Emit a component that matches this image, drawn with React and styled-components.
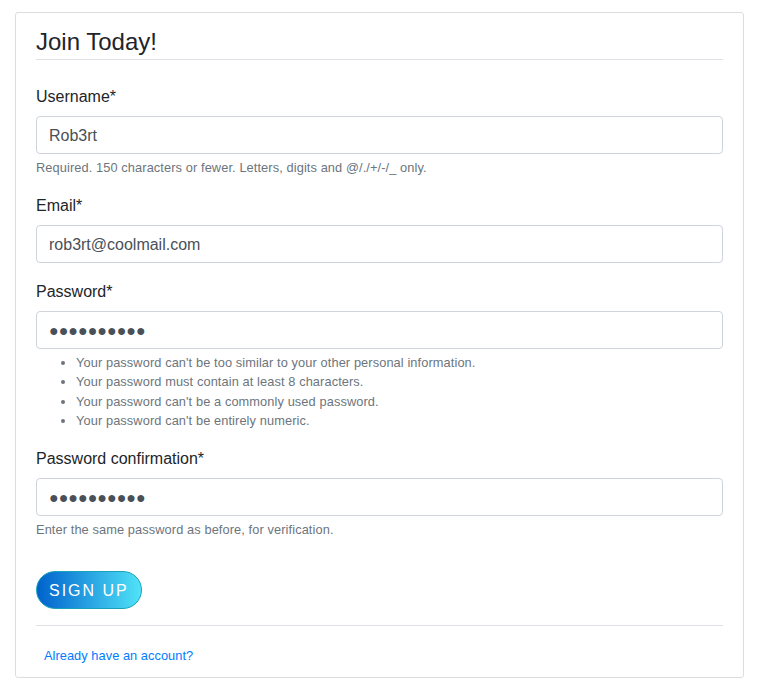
import React from "react";
import styled, { createGlobalStyle } from "styled-components";

const GlobalStyle = createGlobalStyle`
  * {
    box-sizing: border-box;
  }

  body {
    margin: 0;
    background: #fff;
    font-family: "Liberation Sans", Arial, sans-serif;
    font-size: 16px;
    line-height: 1.5;
    color: #212529;
  }
`;

const Page = styled.div`
  padding: 12px 15px;
`;

const Section = styled.div`
  background: #ffffff;
  padding: 10px 20px;
  border: 1px solid #dddddd;
  border-radius: 3px;
`;

const Fieldset = styled.fieldset`
  margin: 0 0 16px;
  padding: 0;
  border: 0;
  min-width: 0;
`;

const Legend = styled.legend`
  display: block;
  width: 100%;
  padding: 1px 0 0;
  margin: 0 0 24px;
  font-size: 24px;
  line-height: 35px;
  border-bottom: 1px solid #dee2e6;
`;

const Group = styled.div`
  margin-bottom: 16px;
`;

const Label = styled.label`
  display: block;
  padding-top: 1px;
  line-height: 23px;
  margin-bottom: 8px;
`;

const Input = styled.input`
  display: block;
  width: 100%;
  height: 38px;
  padding: 7px 12px 5px;
  font-family: inherit;
  font-size: 16px;
  line-height: 1.5;
  color: #495057;
  background: #fff;
  border: 1px solid #ced4da;
  border-radius: 4px;
  outline: none;
`;

const Help = styled.small`
  display: block;
  margin-top: 4px;
  font-size: 12.8px;
  line-height: 19.2px;
  letter-spacing: 0.1px;
  color: #6c757d;
`;

const Rules = styled.ul`
  margin: 0 0 16px;
  padding-left: 40px;
`;

const SignUp = styled.button`
  height: 38px;
  padding: 7px 12px 5px;
  font-family: inherit;
  font-size: 16px;
  line-height: 1.5;
  letter-spacing: 2px;
  color: #fff;
  background: linear-gradient(to right, #0062cc, #50e3f8);
  border: 1px solid #17a2b8;
  border-radius: 19px;
  cursor: pointer;
`;

const Footer = styled.div`
  border-top: 1px solid #dee2e6;
  padding-top: 17px;
  line-height: 23px;
`;

const Small = styled.small`
  font-size: 12.8px;
  letter-spacing: 0.05px;
`;

const SignInLink = styled.a`
  margin-left: 8px;
  color: #007bff;
  text-decoration: none;
`;

const rules = [
  "Your password can't be too similar to your other personal information.",
  "Your password must contain at least 8 characters.",
  "Your password can't be a commonly used password.",
  "Your password can't be entirely numeric.",
];

const mask = "\u25CF".repeat(10);

const App = () => {
  return (
    <>
      <GlobalStyle />
      <Page>
        <Section>
          <form onSubmit={(e) => e.preventDefault()}>
            <Fieldset>
              <Legend>Join Today!</Legend>
              <Group>
                <Label>Username*</Label>
                <Input type="text" defaultValue="Rob3rt" />
                <Help>
                  Required. 150 characters or fewer. Letters, digits and
                  @/./+/-/_ only.
                </Help>
              </Group>
              <Group>
                <Label>Email*</Label>
                <Input type="email" defaultValue="rob3rt@coolmail.com" />
              </Group>
              <Group>
                <Label>Password*</Label>
                <Input type="text" readOnly value={mask} />
                <Help>
                  <Rules>
                    {rules.map((r) => (
                      <li key={r}>{r}</li>
                    ))}
                  </Rules>
                </Help>
              </Group>
              <Group>
                <Label>Password confirmation*</Label>
                <Input type="text" readOnly value={mask} />
                <Help>Enter the same password as before, for verification.</Help>
              </Group>
            </Fieldset>
            <Group>
              <SignUp type="submit">SIGN UP</SignUp>
            </Group>
          </form>
          <Footer>
            <Small>
              <SignInLink href="#">Already have an account?</SignInLink>
            </Small>
          </Footer>
        </Section>
      </Page>
    </>
  );
};

export default App;
